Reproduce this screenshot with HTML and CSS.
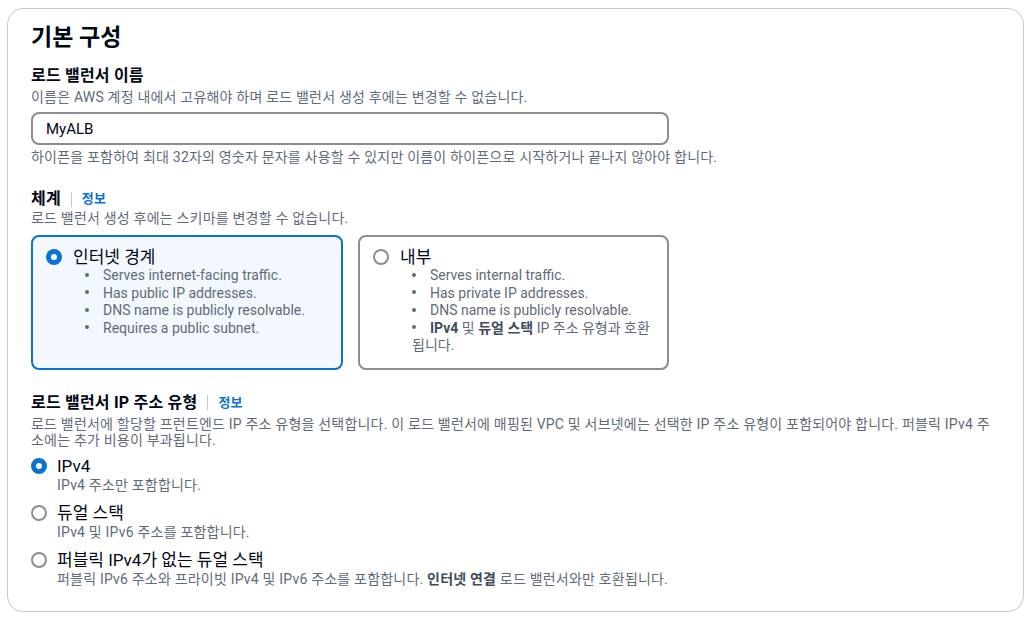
FILE: index.html
```html
<!DOCTYPE html>
<html lang="ko">
<head>
    <meta charset="UTF-8">
    <meta name="viewport" content="width=device-width, initial-scale=1.0">
    <title>기본 구성</title>
    <link rel="stylesheet" href="styles.css">
</head>
<body>
    <div class="panel">
        <h1>기본 구성</h1>

        <!-- Load balancer name -->
        <div class="field name-field">
            <div class="field-label">로드 밸런서 이름</div>
            <div class="field-desc">이름은 AWS 계정 내에서 고유해야 하며 로드 밸런서 생성 후에는 변경할 수 없습니다.</div>
            <input class="text-input" type="text" value="MyALB">
            <div class="field-hint">하이픈을 포함하여 최대 32자의 영숫자 문자를 사용할 수 있지만 이름이 하이픈으로 시작하거나 끝나지 않아야 합니다.</div>
        </div>

        <!-- Scheme -->
        <div class="field scheme-field">
            <div class="field-label">체계<span class="divider"></span><a class="info-link" href="#">정보</a></div>
            <div class="field-desc">로드 밸런서 생성 후에는 스키마를 변경할 수 없습니다.</div>
            <div class="tiles">
                <div class="tile selected">
                    <div class="tile-head">
                        <span class="radio checked"></span>
                        <span class="tile-title">인터넷 경계</span>
                    </div>
                    <ul class="tile-list">
                        <li>Serves internet-facing traffic.</li>
                        <li>Has public IP addresses.</li>
                        <li>DNS name is publicly resolvable.</li>
                        <li>Requires a public subnet.</li>
                    </ul>
                </div>
                <div class="tile">
                    <div class="tile-head">
                        <span class="radio"></span>
                        <span class="tile-title">내부</span>
                    </div>
                    <ul class="tile-list">
                        <li>Serves internal traffic.</li>
                        <li>Has private IP addresses.</li>
                        <li>DNS name is publicly resolvable.</li>
                        <li><b>IPv4</b> 및 <b>듀얼 스택</b> IP 주소 유형과 호환됩니다.</li>
                    </ul>
                </div>
            </div>
        </div>

        <!-- IP address type -->
        <div class="field ip-field">
            <div class="field-label">로드 밸런서 IP 주소 유형<span class="divider"></span><a class="info-link" href="#">정보</a></div>
            <div class="field-desc">로드 밸런서에 할당할 프런트엔드 IP 주소 유형을 선택합니다. 이 로드 밸런서에 매핑된 VPC 및 서브넷에는 선택한 IP 주소 유형이 포함되어야 합니다. 퍼블릭 IPv4 주소에는 추가 비용이 부과됩니다.</div>
            <div class="radio-group">
                <div class="option">
                    <span class="radio checked"></span>
                    <div class="option-text">
                        <div class="option-label">IPv4</div>
                        <div class="option-desc">IPv4 주소만 포함합니다.</div>
                    </div>
                </div>
                <div class="option">
                    <span class="radio"></span>
                    <div class="option-text">
                        <div class="option-label">듀얼 스택</div>
                        <div class="option-desc">IPv4 및 IPv6 주소를 포함합니다.</div>
                    </div>
                </div>
                <div class="option">
                    <span class="radio"></span>
                    <div class="option-text">
                        <div class="option-label">퍼블릭 IPv4가 없는 듀얼 스택</div>
                        <div class="option-desc">퍼블릭 IPv6 주소와 프라이빗 IPv4 및 IPv6 주소를 포함합니다. <b>인터넷 연결</b> 로드 밸런서와만 호환됩니다.</div>
                    </div>
                </div>
            </div>
        </div>
    </div>
</body>
</html>
```

FILE: styles.css
```css
body {
    margin: 8px 12px 0 7px;
    background-color: #fff;
    font-family: Roboto, "Noto Sans CJK KR", sans-serif;
    color: #000716;
}

.panel {
    border: 1px solid #c6c6cd;
    border-radius: 16px;
    padding: 14px 24px 24px 23px;
}

h1 {
    margin: 0;
    font-size: 23px;
    line-height: 30px;
    font-weight: 700;
}

.field-label {
    display: flex;
    align-items: center;
    font-size: 16px;
    line-height: 20px;
    font-weight: 700;
    letter-spacing: 0.2px;
}

.field-desc, .field-hint {
    font-size: 14px;
    line-height: 16px;
    letter-spacing: 0.2px;
    color: #5f6b7a;
}

.divider {
    display: inline-block;
    width: 1px;
    height: 15px;
    background-color: #c6c6cd;
    margin: 0 10px;
}

.info-link {
    color: #0972d3;
    font-size: 13px;
    font-weight: 700;
    text-decoration: none;
}

.name-field {
    margin-top: 13px;
}
.name-field .field-desc {
    margin-top: 3px;
}

.text-input {
    display: block;
    box-sizing: border-box;
    width: 638px;
    height: 33px;
    margin-top: 7px;
    padding: 0 13px;
    border: 2px solid #8c8c94;
    border-radius: 8px;
    font-family: inherit;
    font-size: 15px;
    color: #000716;
}

.field-hint {
    margin-top: 4px;
}

.scheme-field {
    margin-top: 24px;
}
.scheme-field .field-desc {
    margin-top: 1px;
}

.tiles {
    display: grid;
    grid-template-columns: 312px 311px;
    gap: 15px;
    margin-top: 9px;
}

.tile {
    border: 2px solid #8c8c94;
    border-radius: 8px;
    padding: 10px 12px 13px 13px;
}
.tile.selected {
    border-color: #0972d3;
    background-color: #f2f8fd;
}

.tile-head {
    display: flex;
    align-items: center;
    gap: 11px;
    line-height: 20px;
}
.tile-title {
    font-size: 17px;
}

.radio {
    flex: none;
    box-sizing: border-box;
    width: 16px;
    height: 16px;
    border: 2px solid #8c8c94;
    border-radius: 50%;
    background-color: #fff;
}
.radio.checked {
    border: 5px solid #0972d3;
}

.tile-list {
    list-style: none;
    margin: 0;
    padding: 0 0 0 39px;
    font-size: 14px;
    line-height: 17.5px;
    color: #5f6b7a;
}
.tile-list li::before {
    content: "";
    display: inline-block;
    width: 4px;
    height: 4px;
    margin: 0 14px 3px 0;
    border-radius: 50%;
    background-color: #5f6b7a;
    vertical-align: middle;
}
.tile-list b {
    color: #414d5c;
}

.ip-field {
    margin-top: 23px;
}
.ip-field .field-desc {
    margin-top: 3px;
}

.radio-group {
    display: flex;
    flex-direction: column;
    gap: 10px;
    margin-top: 8px;
}

.option {
    display: flex;
    align-items: flex-start;
    gap: 10px;
}
.option .radio {
    margin-top: 2px;
}
.option-label {
    font-size: 17px;
    line-height: 20px;
}
.option-desc {
    margin-top: 1px;
    font-size: 14px;
    line-height: 16px;
    letter-spacing: 0.2px;
    color: #5f6b7a;
}
.option-desc b {
    color: #414d5c;
}
```
